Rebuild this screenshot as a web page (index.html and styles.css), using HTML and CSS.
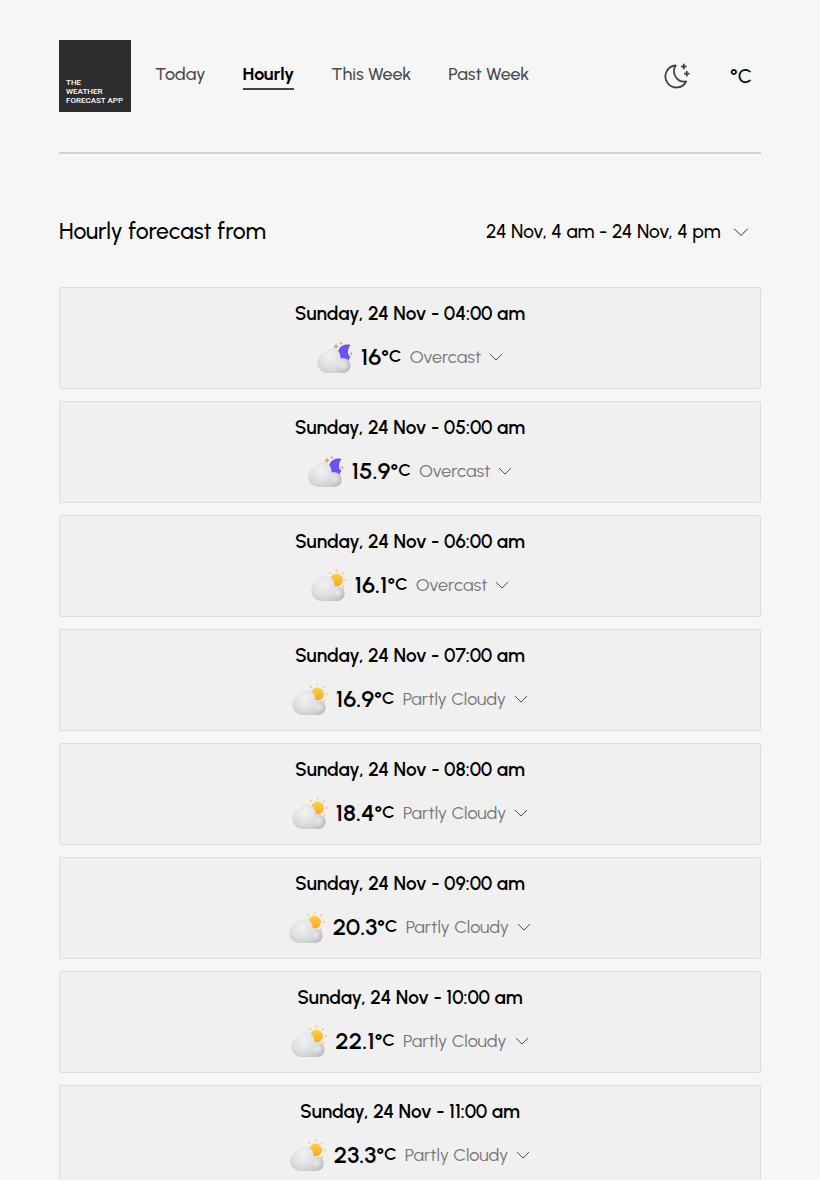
FILE: index.html
```html
<!DOCTYPE html>
<html lang="en">
<head>
<meta charset="utf-8">
<meta name="viewport" content="width=device-width, initial-scale=1">
<title>Hourly forecast</title>
<link rel="stylesheet" href="styles.css">
</head>
<body>
<svg class="defs" width="0" height="0" aria-hidden="true">
  <defs>
    <radialGradient id="cloudFill" gradientUnits="userSpaceOnUse" cx="13" cy="17" r="23">
      <stop offset="0" stop-color="#f2f2f3"/><stop offset=".5" stop-color="#dfe0e2"/><stop offset="1" stop-color="#bcbdc0"/>
    </radialGradient>
    <radialGradient id="puffFill" cx=".5" cy=".45" r=".5">
      <stop offset="0" stop-color="#e9eaeb"/><stop offset="1" stop-color="#e0e1e3" stop-opacity="0"/>
    </radialGradient>
    <linearGradient id="sunFill" x1="0" y1="0" x2="0" y2="1">
      <stop offset="0" stop-color="#ffd04a"/><stop offset="1" stop-color="#ffa51f"/>
    </linearGradient>
  </defs>
  <symbol id="cloud" viewBox="0 0 36 36">
    <path fill="url(#cloudFill)" d="M10.500 34C4.500 33.500 .3 29.300 .3 23.700c0-5 3-8.500 7-9.900C9 10.900 11.800 9.300 15 9.300c5 0 8.700 4.200 8.600 10.200 5.600-.8 10 1.700 10 6.900 0 4.600-3.400 7.600-8 7.600z"/>
    <ellipse cx="26.500" cy="26.500" rx="6.500" ry="6" fill="url(#puffFill)"/>
  </symbol>
  <symbol id="night" viewBox="0 0 36 36">
    <path fill="#6f51fb" d="M33.500 6C28.500 4.700 23.500 6.500 21.500 11c-1.500 4 .5 7 3 9.500 2 1.300 5 1.800 7.500 1.500-.2-1.500.3-3 1.500-4.500-1.700-.8-2.700-2.500-2.500-4.500 0-2.800.9-5 2.500-7z"/>
    <path fill="#d0a679" d="M19 4.500l.9 2.100 2.100.9-2.100.9-.9 2.100-.9-2.100-2.100-.9 2.100-.9zM24 2.500l.6 1.400 1.400.6-1.400.6-.6 1.400-.6-1.400-1.400-.6 1.400-.6zM34.300 12.500l.6 1.500 1.100.6-1.100.6-.6 1.500-.6-1.500-1.400-.6 1.400-.6z"/>
    <use href="#cloud"/>
  </symbol>
  <symbol id="day" viewBox="0 0 36 36">
    <path fill="none" stroke="#f9bd57" stroke-width="1.400" stroke-linecap="round" d="M25.500 3v.8M18.800 5.700l.5.600M32.100 5.900l-.5.500M34.400 13h.8M32 19.500l.5.500"/>
    <circle cx="25.500" cy="13" r="6.400" fill="url(#sunFill)"/>
    <use href="#cloud"/>
  </symbol>
  <symbol id="chevron" viewBox="0 0 16 16">
    <path fill="none" stroke="currentColor" stroke-linecap="round" stroke-linejoin="round" d="M1.500 5L8 11.500 14.500 5"/>
  </symbol>
</svg>
<div class="page">
  <header class="header">
    <a class="logo" href="#">THE<br>WEATHER<br>FORECAST APP</a>
    <nav class="nav">
      <a class="nav-link" href="#">Today</a>
      <a class="nav-link active" href="#" aria-current="page">Hourly</a>
      <a class="nav-link" href="#">This Week</a>
      <a class="nav-link" href="#">Past Week</a>
    </nav>
    <div class="tools">
      <button class="tool" type="button" aria-label="Dark mode">
        <svg class="moon" viewBox="0 0 28 28" fill="none" stroke="currentColor" stroke-width="1.800" stroke-linecap="round" stroke-linejoin="round" aria-hidden="true"><path d="M12.700 3.500A11 11 0 1 0 23.200 19.500 10.500 10.500 0 0 1 12.700 3.500zM20.800 2.500v4M18.800 4.500h4M23.800 9.700v4M21.800 11.700h4"/></svg>
      </button>
      <button class="tool" type="button" aria-label="Temperature unit">°C</button>
    </div>
  </header>
  <main>
    <div class="heading">
      <h1 class="title"><label for="range">Hourly forecast from</label></h1>
      <div class="range">
        <select class="range-select" id="range"><option>24 Nov, 4 am - 24 Nov, 4 pm</option></select>
        <svg class="chevron" aria-hidden="true"><use href="#chevron"/></svg>
      </div>
    </div>
    <div class="list">
      <button class="card" type="button"><span class="time">Sunday, 24 Nov - 04:00 am</span><span class="details"><svg class="weather" aria-hidden="true"><use href="#night"/></svg><span class="temp">16<span class="unit">°C</span></span><span class="condition">Overcast</span><svg class="chevron small" aria-hidden="true"><use href="#chevron"/></svg></span></button>
      <button class="card" type="button"><span class="time">Sunday, 24 Nov - 05:00 am</span><span class="details"><svg class="weather" aria-hidden="true"><use href="#night"/></svg><span class="temp">15.9<span class="unit">°C</span></span><span class="condition">Overcast</span><svg class="chevron small" aria-hidden="true"><use href="#chevron"/></svg></span></button>
      <button class="card" type="button"><span class="time">Sunday, 24 Nov - 06:00 am</span><span class="details"><svg class="weather" aria-hidden="true"><use href="#day"/></svg><span class="temp">16.1<span class="unit">°C</span></span><span class="condition">Overcast</span><svg class="chevron small" aria-hidden="true"><use href="#chevron"/></svg></span></button>
      <button class="card" type="button"><span class="time">Sunday, 24 Nov - 07:00 am</span><span class="details"><svg class="weather" aria-hidden="true"><use href="#day"/></svg><span class="temp">16.9<span class="unit">°C</span></span><span class="condition">Partly Cloudy</span><svg class="chevron small" aria-hidden="true"><use href="#chevron"/></svg></span></button>
      <button class="card" type="button"><span class="time">Sunday, 24 Nov - 08:00 am</span><span class="details"><svg class="weather" aria-hidden="true"><use href="#day"/></svg><span class="temp">18.4<span class="unit">°C</span></span><span class="condition">Partly Cloudy</span><svg class="chevron small" aria-hidden="true"><use href="#chevron"/></svg></span></button>
      <button class="card" type="button"><span class="time">Sunday, 24 Nov - 09:00 am</span><span class="details"><svg class="weather" aria-hidden="true"><use href="#day"/></svg><span class="temp">20.3<span class="unit">°C</span></span><span class="condition">Partly Cloudy</span><svg class="chevron small" aria-hidden="true"><use href="#chevron"/></svg></span></button>
      <button class="card" type="button"><span class="time">Sunday, 24 Nov - 10:00 am</span><span class="details"><svg class="weather" aria-hidden="true"><use href="#day"/></svg><span class="temp">22.1<span class="unit">°C</span></span><span class="condition">Partly Cloudy</span><svg class="chevron small" aria-hidden="true"><use href="#chevron"/></svg></span></button>
      <button class="card" type="button"><span class="time">Sunday, 24 Nov - 11:00 am</span><span class="details"><svg class="weather" aria-hidden="true"><use href="#day"/></svg><span class="temp">23.3<span class="unit">°C</span></span><span class="condition">Partly Cloudy</span><svg class="chevron small" aria-hidden="true"><use href="#chevron"/></svg></span></button>
    </div>
  </main>
</div>
</body>
</html>
```
FILE: styles.css
```css
* { box-sizing: border-box; }
body {
  margin: 0;
  background: #f6f6f6;
  color: #000;
  font-family: Urbanist, Lato, "Open Sans", sans-serif;
  font-size: 19px;
  line-height: 24px;
}
button, select { font: inherit; color: inherit; cursor: pointer; }
.defs { position: absolute; }
.page {
  height: 100vh;
  overflow: hidden;
  padding: 40px 59px 0;
}
.header {
  display: flex;
  align-items: center;
  padding-bottom: 40px;
  border-bottom: 2px solid #d2d2d2;
}
.logo {
  display: flex;
  flex-direction: column;
  justify-content: flex-end;
  width: 72px;
  height: 72px;
  padding: 7px;
  background: #2d2d2d;
  color: #fff;
  font: 500 8px/9px Roboto, sans-serif;
  text-decoration: none;
  white-space: nowrap;
}
.nav { display: flex; gap: 37px; margin-left: 24px; }
.nav-link {
  padding-bottom: 2px;
  border-bottom: 2px solid transparent;
  color: #4b4b4b;
  font-size: 18px;
  font-weight: 500;
  text-decoration: none;
}
.nav-link.active { color: #000; font-weight: 700; border-color: #444; }
.tools { display: flex; align-items: center; gap: 24px; margin-left: auto; }
.tool {
  display: grid;
  place-items: center;
  width: 40px;
  height: 40px;
  padding: 0;
  border: 0;
  background: none;
  font-size: 20px;
  font-weight: 500;
}
.moon { width: 28px; height: 28px; color: #444; }
.heading {
  display: flex;
  align-items: center;
  justify-content: space-between;
  padding: 62px 12px 40px 0;
}
.title { margin: 0; font-size: 23px; font-weight: 500; line-height: 31px; }
.range { display: flex; align-items: center; gap: 12px; }
.range-select {
  appearance: none;
  padding: 0;
  border: 0;
  background: none;
  font-weight: 500;
}
.list { display: grid; gap: 12px; }
.card {
  display: flex;
  flex-direction: column;
  align-items: center;
  gap: 12px;
  width: 100%;
  padding: 14px 12px 12px;
  border: 1px solid #dedede;
  border-radius: 2px;
  background: #f0f0f0;
}
.time { font-weight: 600; }
.details { display: flex; align-items: center; gap: 8px; height: 38px; }
.weather { width: 36px; height: 36px; }
.temp { display: flex; font-size: 24px; font-weight: 600; }
.unit { font-size: 18px; line-height: 22px; }
.condition { color: #777; font-size: 18px; }
.chevron { width: 16px; height: 16px; color: #333; }
.chevron.small { width: 14px; height: 14px; }
```
